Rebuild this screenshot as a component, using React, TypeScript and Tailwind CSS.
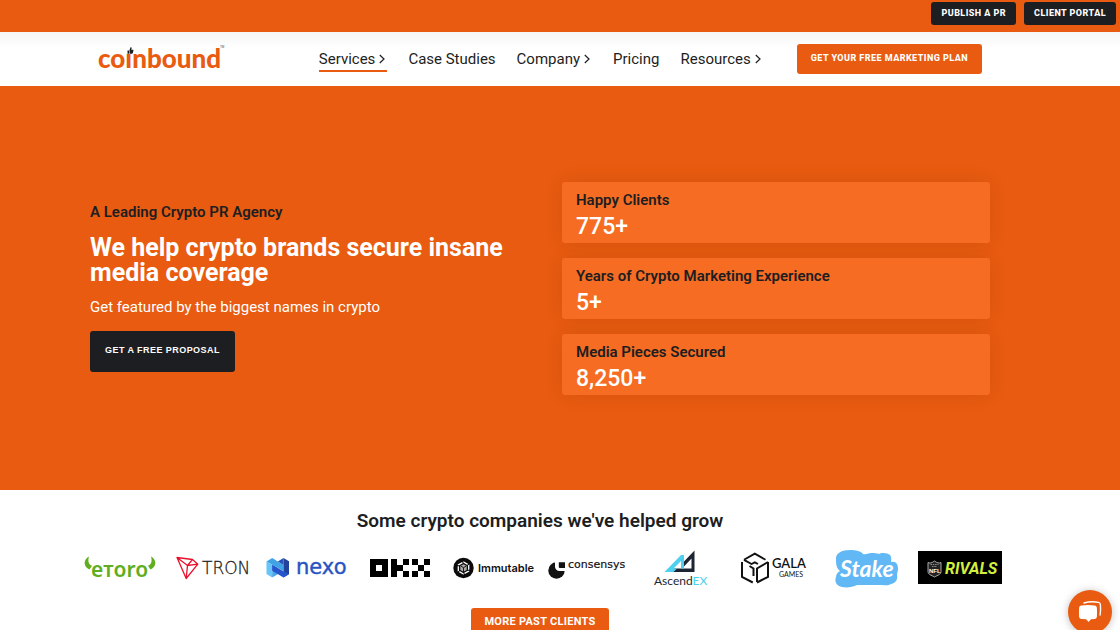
import React from "react";

type NavItem = { label: string; menu: boolean; active?: boolean };

const navItems: NavItem[] = [
  { label: "Services", menu: true, active: true },
  { label: "Case Studies", menu: false },
  { label: "Company", menu: true },
  { label: "Pricing", menu: false },
  { label: "Resources", menu: true },
];

const stats = [
  { label: "Happy Clients", value: "775+" },
  { label: "Years of Crypto Marketing Experience", value: "5+" },
  { label: "Media Pieces Secured", value: "8,250+" },
];

function Chevron() {
  return (
    <svg width="6" height="10" viewBox="0 0 6 10" className="mr-0.5 ml-1" aria-hidden="true">
      <path d="M.8 1l4.200 4L.8 9" fill="none" stroke="#1d1e21" strokeWidth="1.200" />
    </svg>
  );
}

function CoinboundLogo() {
  return (
    <svg width="127" height="28" viewBox="0 0 127 28" className="overflow-visible" role="img" aria-label="coinbound">
      <text x="0" y="23" className="fill-[#e85b10] font-['Lato',sans-serif] text-[26px] font-black">
        coınbound
      </text>
      <path d="M29.500 5.500H31v3.200h-1.500zM31.500 5.100l1-2.800c1-.2 1.300.6 1 1.400l-.3 1h1.600c.6 0 .8.5.6 1l-.6 2.400c-.1.500-.4.700-.9.700h-2.400z" fill="#1d1e21" />
      <text x="122" y="3" className="fill-[#444] font-['Liberation_Sans',sans-serif] text-[3px]">TM</text>
    </svg>
  );
}

function Etoro() {
  return (
    <svg width="72" height="28" viewBox="0 0 72 28" className="overflow-visible" role="img" aria-label="eToro">
      <path d="M5 2.500C-.8 5.500-1 12.500 5.500 15.500L8 11.800C5 11 3.500 7.500 5 2.500zM67 2.500c5.800 3 6 10-.5 13L64 11.800c3-.8 4.500-4.300 3-9.300z" fill="#60ae1e" />
      <text x="7" y="23" className="fill-[#60ae1e] font-['Noto_Sans',sans-serif] text-[21px] font-semibold">eтoro</text>
    </svg>
  );
}

function Tron() {
  return (
    <svg width="74" height="28" viewBox="0 0 74 28" className="overflow-visible" role="img" aria-label="TRON">
      <path d="M1 3.500L16.500 5.500l5.300 4.700L10.200 24.500zM1 3.500l10.500 8-1.300 13M11.500 11.500l5-6M11.500 11.500l10.300-1.300" fill="none" stroke="#e8112d" strokeWidth="1.300" strokeLinejoin="round" />
      <text x="26" y="20" className="fill-[#222] stroke-[#222] font-['DejaVu_Sans',sans-serif] text-[17px] font-extralight" strokeWidth=".3">TRON</text>
    </svg>
  );
}

function Nexo() {
  return (
    <svg width="80" height="28" viewBox="0 0 80 28" className="overflow-visible" role="img" aria-label="nexo">
      <path d="M.5 7.500l5.700 3.300v12.700L.5 20z" fill="#66c4f8" />
      <path d="M6.200 10.800l5.600 3.400v6L6.200 23.500z" fill="#4ba6e8" />
      <path d="M6.200 4l11.300 7v6L.5 7.500z" fill="#3fa3e4" />
      <path d="M17.500 4L23 7.200v12.900l-5.500 3.400z" fill="#22439c" />
      <path d="M17.500 4v7l-5.700-3.500z" fill="#2a51b8" />
      <path d="M6.200 10.800l11.300 6.400 5.500 3-5.500 3.300-11.300-6.800z" fill="#2654cc" />
      <text x="30" y="20" className="fill-[#2853c3] stroke-[#2853c3] font-['DejaVu_Sans',sans-serif] text-[21px]" strokeWidth=".4">nexo</text>
    </svg>
  );
}

function Okx() {
  return (
    <svg width="62" height="28" viewBox="0 0 62 28" role="img" aria-label="OKX" shapeRendering="crispEdges">
      <path
        fillRule="evenodd"
        d="M1 5h18v18H1zM7 11v6h6v-6zM22 5h6v18h-6zM28 11h6v6h-6zM34 5h6v6h-6zM34 17h6v6h-6zM43 5h6v6h-6zM55 5h6v6h-6zM49 11h6v6h-6zM43 17h6v6h-6zM55 17h6v6h-6z"
        fill="#000"
      />
    </svg>
  );
}

function Immutable() {
  return (
    <svg width="80" height="28" viewBox="0 0 80 28" className="overflow-visible" role="img" aria-label="Immutable">
      <circle cx="10.500" cy="14" r="10.200" fill="#0b0b0b" />
      <path d="M10.500 8l5.200 3v6l-5.200 3-5.200-3v-6z" fill="none" stroke="#fff" strokeWidth="1.300" strokeDasharray="4.800 1.200" />
      <path d="M10.500 10.300l3.200 1.800v3.800l-3.200 1.800-3.200-1.800v-3.800z" fill="#aaa" />
      <path d="M10.500 13.700v5M8 12.200l2.500 1.500 2.500-1.500" fill="none" stroke="#0b0b0b" strokeWidth=".9" />
      <text x="25" y="18" className="fill-[#111] font-['Inter',sans-serif] text-[11px] font-semibold">Immutable</text>
    </svg>
  );
}

function Consensys() {
  return (
    <svg width="78" height="28" viewBox="0 0 78 28" className="overflow-visible" role="img" aria-label="consensys">
      <circle cx="8.500" cy="16.500" r="8.200" fill="#121212" />
      <path d="M7 7v5.500a4.500 4.500 0 0 0 4.500 4.500H18V7z" fill="#fff" />
      <path d="M10.800 8.300h6.200v5.600h-5.200a1 1 0 0 1-1-1z" fill="#121212" />
      <text x="20" y="14" className="fill-[#121212] stroke-[#121212] font-['DejaVu_Sans',sans-serif] text-[11px]" strokeWidth=".2">consensys</text>
    </svg>
  );
}

function AscendEx() {
  return (
    <svg width="54" height="38" viewBox="0 0 54 38" className="overflow-visible" role="img" aria-label="AscendEX">
      <path d="M41.500 1.500v21.500H18l3-3.500h17.500V9.500L31 17.500v-5z" fill="#1d2433" />
      <path d="M31 6v13.500h-3V12L20.500 19.500H24L20.500 23H11.500L28 6z" fill="#4fd0ee" />
      <text x="1" y="36" className="fill-[#1d2433] font-['Lato',sans-serif] text-[12px]">
        Ascend<tspan className="fill-[#4fd0ee]">EX</tspan>
      </text>
    </svg>
  );
}

function Gala() {
  return (
    <svg width="66" height="34" viewBox="0 0 66 34" className="overflow-visible" role="img" aria-label="GALA GAMES">
      <path d="M4 8.800L14.800 2.600 25.500 8.800M4 8.800L11.500 13l3.300-1.600L18 13" fill="none" stroke="#111" strokeWidth="1.900" />
      <path d="M2 11v14.800L12.800 31.500M28 11v14.800L17 31.500M28 11l-11 6.500V31M9.500 15l4 2.500V25" fill="none" stroke="#111" strokeWidth="2" />
      <text x="32" y="17" className="fill-[#111] font-['Lato',sans-serif] text-[13px] font-semibold">GALA</text>
      <text x="39" y="26" className="fill-[#111] font-['Lato',sans-serif] text-[7px]">GAMES</text>
    </svg>
  );
}

function Stake() {
  return (
    <svg width="64" height="38" viewBox="0 0 64 38" className="overflow-visible" role="img" aria-label="Stake">
      <path d="M1 11C0 4 7 1 15 1c6 0 11 1 13 4 3 1 5-1 8-1 4 0 6 0 8 1 3-2 9-1 11 1 2 3 1 5 1 7 5-1 7 2 7 7 0 2-1 4-1 6 1 4-1 8-6 9-3 2-6 1-9 1H22c-4 2-10 3-15 2-5-1-8-5-6-10 0-3 2-5 4-6-3-2-4-6-4-10z" fill="#62b8f5" />
      <text x="5" y="28" className="fill-white font-['Lato',sans-serif] text-[23px] font-bold italic">
        Stake
      </text>
    </svg>
  );
}

function Rivals() {
  return (
    <svg width="84" height="34" viewBox="0 0 84 34" role="img" aria-label="NFL RIVALS">
      <rect width="84" height="33" fill="#000" />
      <path d="M10 11.500c2 1 4 .5 6.500-1.500 2.500 2 4.500 2.500 6.500 1.500v9c0 3-3 3.500-6.500 5.500-3.500-2-6.500-2.500-6.500-5.500z" fill="#222" stroke="#bbb" strokeWidth=".9" />
      <path d="M12.500 13.500h8M14 15.500h5" stroke="#aaa" strokeWidth=".8" strokeDasharray="1.500 .8" />
      <text x="11" y="22" className="fill-white font-['Liberation_Sans',sans-serif] text-[6px] font-bold">NFL</text>
      <text x="27" y="23" className="fill-[#d3f03c] font-['Roboto',sans-serif] text-[16px] font-bold italic">
        RIVALS
      </text>
    </svg>
  );
}

const clients = [Etoro, Tron, Nexo, Okx, Immutable, Consensys, AscendEx, Gala, Stake, Rivals];

export default function App() {
  return (
    <div className="min-h-screen bg-white font-['Roboto',sans-serif] text-[#1d1e21]">
      <div className="flex h-8 items-start justify-end gap-2 bg-[#e85b10] pt-0.5 pr-1">
        <a href="#publish" className="flex h-[23px] items-center rounded-[3px] bg-[#1d1e21] px-2.5 text-[9px] font-extrabold tracking-wider text-white">
          PUBLISH A PR
        </a>
        <a href="#portal" className="flex h-[23px] items-center rounded-[3px] bg-[#1d1e21] px-2.5 text-[9px] font-extrabold tracking-wider text-white">
          CLIENT PORTAL
        </a>
      </div>

      <header className="bg-linear-to-b from-[#f6f6f6] to-white to-30% pr-10">
        <div className="mx-auto flex h-[54px] max-w-[884px] items-center">
          <a href="#home">
            <CoinboundLogo />
          </a>
          <nav className="mr-[34px] ml-auto flex items-center gap-[21px]">
            {navItems.map((item) => (
              <a
                key={item.label}
                href={"#" + item.label.toLowerCase().replace(" ", "-")}
                className={
                  "flex items-center border-b-2 pt-0.5 text-[15px] leading-[22px] whitespace-nowrap " +
                  (item.active ? "border-[#e85b10]" : "border-transparent")
                }
              >
                {item.label}
                {item.menu && <Chevron />}
              </a>
            ))}
          </nav>
          <a href="#plan" className="flex h-[30px] items-center rounded-[3px] bg-[#e85b10] px-3.5 text-[9px] font-extrabold tracking-wider whitespace-nowrap text-white">
            GET YOUR FREE MARKETING PLAN
          </a>
        </div>
      </header>

      <section className="bg-[#e85b10] pr-10">
        <div className="mx-auto grid max-w-[900px] grid-cols-2 items-center gap-11 pt-24 pb-[95px]">
          <div className="flex flex-col items-start pb-0.5">
            <p className="text-[15px] leading-4 font-semibold">A Leading Crypto PR Agency</p>
            <h1 className="mt-[15px] text-[25px] leading-[25px] font-bold text-white">
              We help crypto brands secure insane media coverage
            </h1>
            <p className="mt-3 text-[15px] leading-5 text-white">Get featured by the biggest names in crypto</p>
            <button type="button" className="mt-3.5 h-[41px] rounded-[3px] bg-[#1d1e21] px-[15px] font-['Liberation_Sans',sans-serif] text-[9px] font-bold tracking-wider text-white">
              GET A FREE PROPOSAL
            </button>
          </div>
          <div className="flex flex-col gap-[15px]">
            {stats.map((stat) => (
              <div key={stat.label} className="rounded-[3px] bg-[#f66c22] px-3.5 pt-2 shadow-[0_0_20px_rgba(0,0,0,0.08)]">
                <p className="text-[15px] leading-5 font-semibold">{stat.label}</p>
                <p className="text-[23px] leading-[33px] font-medium text-white">{stat.value}</p>
              </div>
            ))}
          </div>
        </div>
      </section>

      <section className="pr-10">
        <div className="mx-auto flex max-w-[934px] flex-col items-center pt-[19px]">
          <h2 className="text-[19px] leading-6 font-semibold">Some crypto companies we've helped grow</h2>
          <div className="mt-[15px] grid h-10 w-full grid-cols-10 items-center justify-items-center">
            {clients.map((Logo, i) => (
              <Logo key={i} />
            ))}
          </div>
          <a href="#clients" className="mt-5 flex h-7 items-center rounded-[3px] bg-[#e85b10] px-[13px] text-[11px] font-bold tracking-wide text-white">
            MORE PAST CLIENTS
          </a>
        </div>
      </section>

      <button
        type="button"
        aria-label="Open chat"
        className="fixed right-2 -bottom-1 flex size-11 items-center justify-center rounded-full bg-[#e85b10] shadow-[0_1px_8px_rgba(0,0,0,0.25)]"
      >
        <svg width="24" height="24" viewBox="0 0 24 24" aria-hidden="true">
          <path d="M6 3c4-1.200 10-1.500 14.500-.6 1.200.3 1.800 1 1.900 2.200.3 3.500.2 7-.3 10.400" fill="none" stroke="#fff" strokeWidth="1.400" strokeLinecap="round" />
          <path d="M3.500 5.600c4-.7 9-.7 13 0 1.500.2 2.300 1.100 2.400 2.500.2 3 .2 5.500 0 8.400-.1 1.400-.9 2.200-2.400 2.400l-3.500.3L10.500 22l-2.300-2.800-4.700-.3c-1.500-.2-2.300-1-2.400-2.400-.2-3-.2-5.500 0-8.400.1-1.400.9-2.300 2.400-2.500z" fill="#fff" />
        </svg>
      </button>
    </div>
  );
}
